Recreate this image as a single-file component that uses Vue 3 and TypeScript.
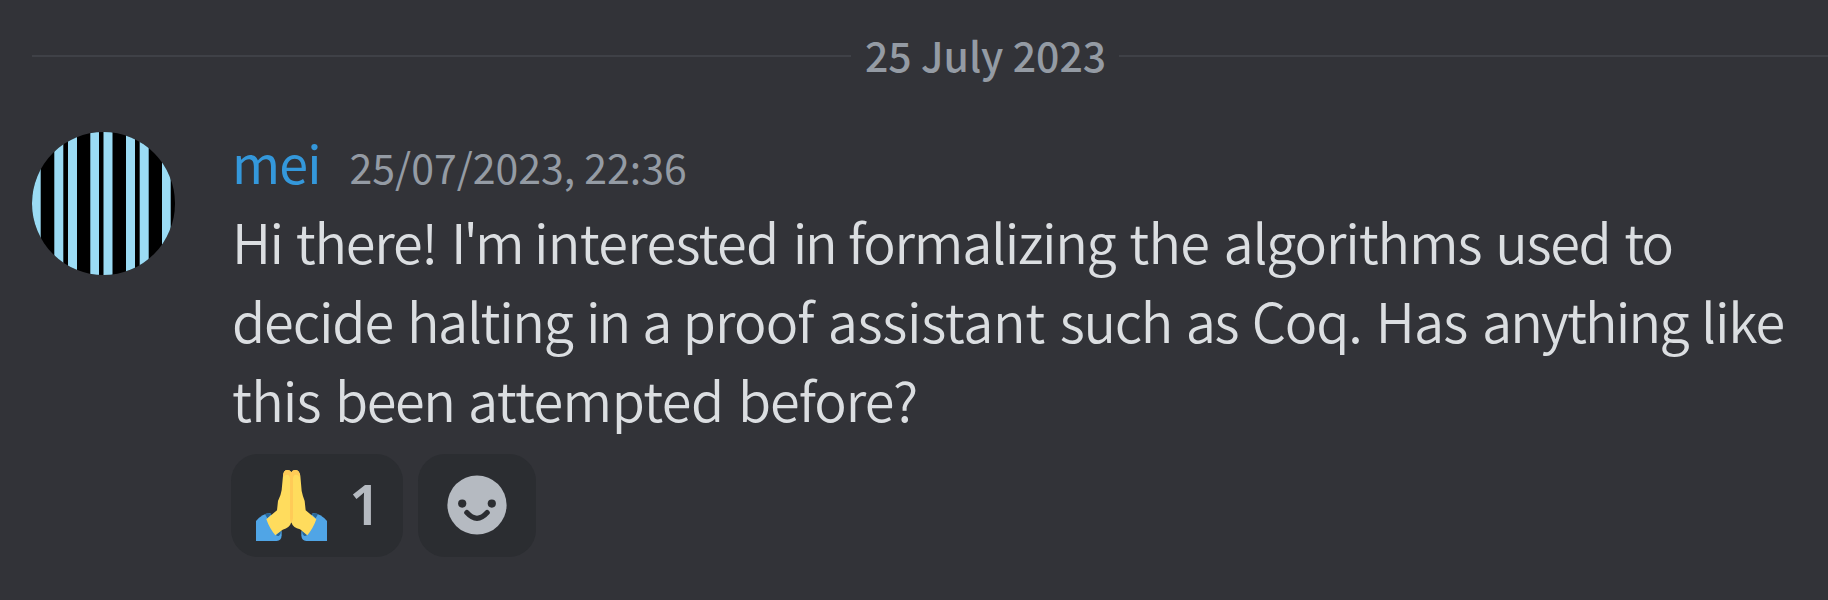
<script setup lang="ts">
interface Word {
  text: string
  tracking: number
}

const word = (text: string, tracking: number): Word => ({ text, tracking })

const lines: Word[][] = [
  [
    word('Hi', -1.6), word('there!', -1.22), word("I'm", -2.9), word('interested', -0.7),
    word('in', -2.3), word('formalizing', -1.29), word('the', -0.75), word('algorithms', -1.12),
    word('used', -1.3), word('to', -1.8),
  ],
  [
    word('decide', -1.09), word('halting', -1.37), word('in', -2), word('a', -2.4),
    word('proof', -0.87), word('assistant', -0.3), word('such', -1.28), word('as', -1.4),
    word('Coq.', -1.1), word('Has', -0.75), word('anything', -1.81), word('like', -1.1),
  ],
  [word('this', -0.82), word('been', -1.42), word('attempted', -0.6), word('before?', -1)],
]

const reactionCount = 1

// Left edge and width of every light stripe on the avatar
const stripes = [
  [0, 8.7], [22.3, 9], [36, 9], [58.3, 8.7], [71.5, 9], [94, 9], [107.7, 9], [130, 8.7],
]
</script>

<template>
  <main class="chat">
    <div class="divider">
      <span class="rule"></span>
      <span class="day">25 July 2023</span>
      <span class="rule"></span>
    </div>

    <article class="message">
      <svg class="avatar" viewBox="0 0 143 143">
        <defs>
          <clipPath id="avatar-clip"><circle cx="71.5" cy="71.5" r="71.5" /></clipPath>
        </defs>
        <g clip-path="url(#avatar-clip)">
          <rect width="143" height="143" fill="#000" />
          <rect v-for="[x, w] in stripes" :key="x" :x="x" y="0" :width="w" height="143" fill="#9bdbf4" />
        </g>
      </svg>

      <div class="content">
        <header class="meta">
          <span class="author">mei</span>
          <time class="time">25/07/2023, 22:36</time>
        </header>

        <div class="body">
          <div v-for="(line, i) in lines" :key="i" class="line"><span
            v-for="(w, j) in line" :key="j" :style="{ letterSpacing: w.tracking + 'px' }">{{ w.text + ' ' }}</span></div>
        </div>

        <div class="reactions">
          <button class="reaction">
            <svg class="hands" viewBox="0 0 213 213">
              <path fill="#50a5e6" d="M0 153 Q22 128 43 130 L77 185 V196 Q76 213 62 213 H0Z" />
              <path fill="#50a5e6" d="M213 153 Q191 128 170 130 L136 185 V196 Q137 213 151 213 H213Z" />
              <path fill="#2a6797" d="M27 133 Q36 127 47 132 L34 145Z M186 133 Q177 127 166 132 L179 145Z M60 195 L74 181 Q76 193 68 198 Q63 199 60 195Z M153 195 L139 181 Q137 193 145 198 Q150 199 153 195Z" />
              <path fill="#ffdc5d" d="M81 17 Q82 0 94 0 Q102 0 106 7 Q110 0 118 0 Q131 0 133 17 L137 63 Q140 78 146 93 L149 121 L181 148 Q171 176 154 196 L132 178 Q111 174 106 157 Q101 174 80 179 L58 196 Q41 176 31 148 L63 121 L66 93 Q75 75 77 60Z" />
              <path fill="#ffcb57" d="M81 22 Q81 0 94 0 Q102 0 106 7 Q110 0 118 0 Q131 0 132 22 Q128 14 120 14 Q112 15 111 25 V145 Q110 154 106 158 Q102 154 102 145 V25 Q101 15 93 14 Q85 14 81 22Z" />
            </svg>
            <span class="count">{{ reactionCount }}</span>
          </button>
          <button class="reaction add" aria-label="Add reaction">
            <svg class="smile" viewBox="0 0 60 60">
              <circle cx="30" cy="30" r="29.6" fill="#b5bac1" />
              <circle cx="15.2" cy="28.6" r="4.1" fill="#2b2d31" />
              <circle cx="44.8" cy="28.6" r="4.1" fill="#2b2d31" />
              <path d="M19.8 37.6 Q30 49 40.2 37.6" fill="none" stroke="#2b2d31" stroke-width="5.2" stroke-linecap="round" />
            </svg>
          </button>
        </div>
      </div>
    </article>
  </main>
</template>

<style>
body {
  background: #323338;
}
</style>

<style scoped>
.chat {
  box-sizing: border-box;
  height: 600px;
  overflow: hidden;
  padding: 26px 0 0 32px;
  background: #323338;
  font-family: "Noto Sans CJK SC", "Noto Sans", sans-serif;
}

.divider {
  display: flex;
  align-items: center;
  height: 60px;
}

.rule {
  height: 2px;
  background: #3f4147;
}

.rule:first-child {
  width: 819px;
}

.rule:last-child {
  flex: 1;
}

.day {
  box-sizing: border-box;
  width: 268px;
  padding: 0 0 4px 14px;
  color: #949ba4;
  font-size: 41px;
  font-weight: 500;
  line-height: 60px;
  white-space: nowrap;
}

.message {
  display: flex;
  margin-top: 46px;
}

.avatar {
  flex: none;
  width: 143px;
  height: 143px;
}

.content {
  margin-left: 56px;
}

.meta {
  display: flex;
  align-items: baseline;
  height: 69px;
  line-height: 60px;
  white-space: nowrap;
}

.author {
  padding-left: 1px;
  color: #3498db;
  font-size: 52px;
  font-weight: 400;
  letter-spacing: -0.9px;
}

.time {
  margin-left: 29px;
  color: #949ba4;
  font-size: 41px;
  font-weight: 400;
}

.body {
  padding-left: 1px;
  color: #dbdee1;
  font-size: 54px;
  font-weight: 350;
  line-height: 79px;
  word-spacing: 3px;
}

.line {
  height: 79px;
  white-space: pre;
}

.reactions {
  display: flex;
  gap: 15px;
  margin-top: 16px;
}

.reaction {
  display: flex;
  align-items: center;
  box-sizing: border-box;
  width: 172px;
  height: 103px;
  padding: 0 0 0 25px;
  border: 0;
  border-radius: 27px;
  background: #2b2d31;
  color: #b5bac1;
  font-family: inherit;
}

.hands {
  width: 71px;
  height: 71px;
}

.count {
  margin-left: 22px;
  padding-bottom: 6px;
  font-family: "Noto Sans", sans-serif;
  font-size: 56px;
  font-weight: 600;
  line-height: 76px;
}

.reaction.add {
  width: 118px;
  padding: 0 0 2px 29px;
}

.smile {
  width: 60px;
  height: 60px;
}
</style>
